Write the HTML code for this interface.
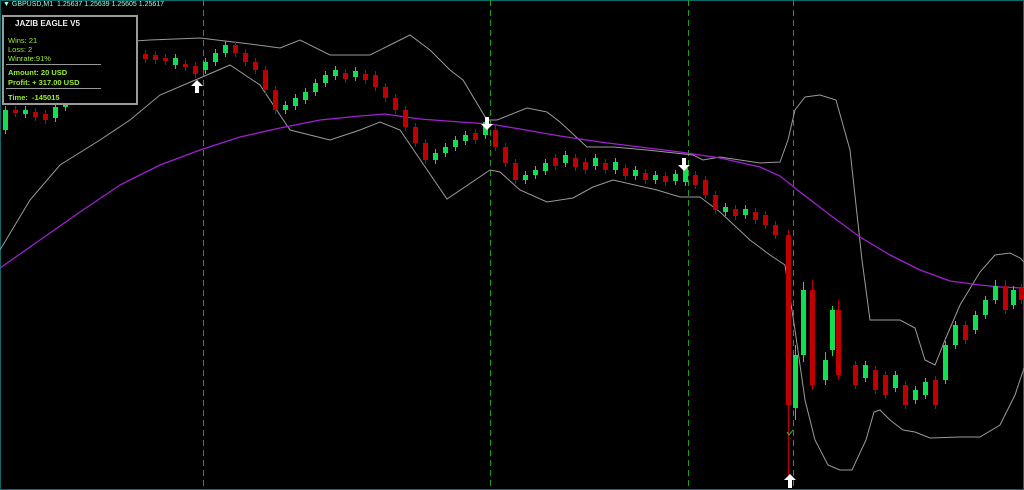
<!DOCTYPE html>
<html><head><meta charset="utf-8"><style>
html,body{margin:0;padding:0;background:#000;width:1024px;height:490px;overflow:hidden}
#c{position:absolute;left:0;top:0}
#hdr{position:absolute;left:3px;top:1px;font:7px "Liberation Sans",sans-serif;color:#9fd;white-space:nowrap}
#panel{position:absolute;left:2px;top:15px;width:132px;height:86px;border:2px solid #9a9a9a;background:#000;font:bold 7.5px "Liberation Sans",sans-serif;color:#9e3}
#panel .t{position:absolute;left:11px;top:2px;color:#eee;font-size:8px}
#panel div{position:absolute;left:4px}
.n{font-weight:normal}
.hr{height:1px;background:#999;left:2px!important;width:95px}
</style></head><body>
<svg id="c" width="1024" height="490" xmlns="http://www.w3.org/2000/svg">
<rect x="0.5" y="0.5" width="1023" height="489" fill="none" stroke="#0a6a6a"/>
<g stroke="#1ca01c" stroke-dasharray="6,4" stroke-width="1">
<line x1="203.5" y1="0" x2="203.5" y2="490"/><line x1="490.5" y1="0" x2="490.5" y2="490"/>
<line x1="688.5" y1="0" x2="688.5" y2="490"/><line x1="793.5" y1="0" x2="793.5" y2="490"/></g>
<g fill="none" stroke="#9a9a9a" stroke-width="1">
<polyline points="0,250 30,200 60,165 100,140 130,120 160,95 200,78 230,65 260,85 290,130 330,140 360,130 380,122 400,130 447,199 490,170 500,172 520,190 547,202 573,198 593,187 613,180 657,190 680,197 700,197 720,212 750,240 770,255 785,265 795,330 805,400 815,440 828,465 840,470 852,470 866,440 874,412 880,410 890,420 903,430 915,432 930,438 960,437 980,437 1000,425 1015,395 1024,368"/>
<polyline points="120,42 150,40 200,38 250,44 280,48 300,40 330,55 370,55 390,45 410,35 430,50 450,70 463,80 487,120 497,120 527,108 547,112 560,122 587,147 613,147 647,150 693,155 703,160 720,157 760,163 780,162 788,140 795,110 805,97 820,95 836,100 850,150 862,260 870,320 900,320 915,328 925,360 935,365 945,340 960,305 980,272 995,255 1010,253 1020,258 1024,262"/>
</g>
<polyline fill="none" stroke="#a020d0" stroke-width="1.3" points="0,268 40,240 80,212 120,185 160,165 200,150 240,137 280,128 320,120 360,116 385,114 420,119 460,122 490,124 520,129 560,136 600,142 640,147 680,152 720,158 760,167 780,176 800,192 830,215 860,237 890,255 920,270 950,281 980,285 1000,287 1024,288"/>
<path fill="#10e050" d="M3 110h5V130h-5zM23 110h5V114h-5zM53 107h5V118h-5zM63 96h5V107h-5zM73 82h5V96h-5zM83 71h5V82h-5zM93 60h5V71h-5zM113 55h5V60h-5zM133 53h5V58h-5zM173 58h5V65h-5zM203 62h5V70h-5zM213 53h5V62h-5zM223 45h5V53h-5zM283 105h5V110h-5zM293 98h5V106h-5zM303 92h5V100h-5zM313 83h5V92h-5zM323 75h5V83h-5zM333 70h5V76h-5zM353 71h5V77h-5zM433 153h5V160h-5zM443 147h5V153h-5zM453 140h5V147h-5zM463 135h5V141h-5zM483 122h5V135h-5zM523 175h5V180h-5zM533 170h5V175h-5zM543 163h5V171h-5zM563 155h5V163h-5zM593 158h5V166h-5zM613 162h5V170h-5zM633 170h5V176h-5zM653 175h5V180h-5zM673 174h5V181h-5zM683 168h5V182h-5zM723 207h5V212h-5zM743 209h5V215h-5zM793 355h5V408h-5zM801 290h5V355h-5zM823 360h5V380h-5zM830 310h5V350h-5zM863 365h5V378h-5zM893 375h5V388h-5zM913 390h5V400h-5zM923 382h5V395h-5zM943 345h5V380h-5zM953 325h5V345h-5zM973 315h5V330h-5zM983 300h5V315h-5zM993 286h5V300h-5zM1011 290h5V305h-5z"/>
<path stroke="#10e050" d="M5.5 106V134M25.5 106V118M55.5 103V122M65.5 92V111M75.5 78V100M85.5 67V86M95.5 56V75M115.5 51V64M135.5 49V62M175.5 54V69M205.5 58V74M215.5 49V66M225.5 41V57M285.5 101V114M295.5 94V110M305.5 88V104M315.5 79V96M325.5 71V87M335.5 66V80M355.5 67V81M435.5 149V164M445.5 143V157M455.5 136V151M465.5 131V145M485.5 118V139M525.5 171V184M535.5 166V179M545.5 159V175M565.5 151V167M595.5 154V170M615.5 158V174M635.5 166V180M655.5 171V184M675.5 170V185M685.5 164V186M725.5 203V216M745.5 205V219M795.5 345V420M803.5 282V362M825.5 352V385M832.5 306V356M865.5 361V382M895.5 371V392M915.5 386V404M925.5 378V399M945.5 341V384M955.5 321V349M975.5 311V334M985.5 296V319M995.5 280V304M1013.5 286V309"/>
<path fill="#c00000" d="M13 110h5V113h-5zM33 112h5V117h-5zM43 114h5V120h-5zM103 57h5V62h-5zM123 56h5V61h-5zM143 54h5V59h-5zM153 55h5V60h-5zM163 58h5V61h-5zM183 64h5V67h-5zM193 66h5V74h-5zM233 45h5V53h-5zM243 53h5V62h-5zM253 62h5V70h-5zM263 70h5V90h-5zM273 90h5V110h-5zM343 73h5V79h-5zM363 74h5V80h-5zM373 75h5V87h-5zM383 87h5V98h-5zM393 98h5V110h-5zM403 110h5V127h-5zM413 127h5V143h-5zM423 143h5V160h-5zM473 133h5V140h-5zM493 130h5V147h-5zM503 147h5V163h-5zM513 163h5V180h-5zM553 158h5V166h-5zM573 158h5V167h-5zM583 162h5V170h-5zM603 163h5V170h-5zM623 168h5V176h-5zM643 173h5V180h-5zM663 176h5V182h-5zM693 175h5V185h-5zM703 180h5V195h-5zM713 195h5V210h-5zM733 209h5V216h-5zM753 212h5V220h-5zM763 215h5V225h-5zM773 225h5V235h-5zM786 235h5V405h-5zM810 290h5V385h-5zM836 310h5V375h-5zM853 365h5V385h-5zM873 370h5V390h-5zM883 375h5V395h-5zM903 385h5V405h-5zM933 380h5V405h-5zM963 325h5V340h-5zM1003 286h5V310h-5zM1019 288h5V300h-5z"/>
<path stroke="#c00000" d="M15.5 106V117M35.5 108V121M45.5 110V124M105.5 53V66M125.5 52V65M145.5 50V63M155.5 51V64M165.5 54V65M185.5 60V71M195.5 62V78M235.5 41V57M245.5 49V66M255.5 58V74M265.5 66V94M275.5 86V114M345.5 69V83M365.5 70V84M375.5 71V91M385.5 83V102M395.5 94V114M405.5 106V131M415.5 123V147M425.5 139V164M475.5 129V144M495.5 126V151M505.5 143V167M515.5 159V184M555.5 154V170M575.5 154V171M585.5 158V174M605.5 159V174M625.5 164V180M645.5 169V184M665.5 172V186M695.5 171V189M705.5 176V199M715.5 191V214M735.5 205V220M755.5 208V224M765.5 211V229M775.5 221V239M788.5 230V485M812.5 280V390M838.5 300V380M855.5 361V389M875.5 366V394M885.5 371V399M905.5 381V409M935.5 376V409M965.5 321V344M1005.5 280V314M1021.5 284V304"/>
<g fill="#fff">
<path d="M197,80 l-6,6 h4 v7 h4 v-7 h4 z"/>
<path d="M790,474 l-6,6 h4 v8 h4 v-8 h4 z"/>
<path d="M487,130 l-6,-6 h4 v-7 h4 v7 h4 z"/>
<path d="M684,171 l-6,-6 h4 v-7 h4 v7 h4 z"/>
</g>
<path d="M787,432 l2,3 l4,-5" stroke="#2c2" fill="none"/>
</svg>
<div id="hdr">▼ GBPUSD,M1&nbsp; 1.25637 1.25639 1.25605 1.25617</div>
<div id="panel">
<div class="t" style="left:11px">JAZIB EAGLE V5</div>
<div class="n" style="top:19px">Wins: 21</div>
<div class="n" style="top:28px">Loss: 2</div>
<div class="n" style="top:37px">Winrate:91%</div>
<div class="hr" style="top:47px"></div>
<div style="top:51px">Amount: 20 USD</div>
<div style="top:61px">Profit: + 317.00 USD</div>
<div class="hr" style="top:71px"></div>
<div style="top:76px">Time:&nbsp; -145015</div>
</div>
</body></html>
